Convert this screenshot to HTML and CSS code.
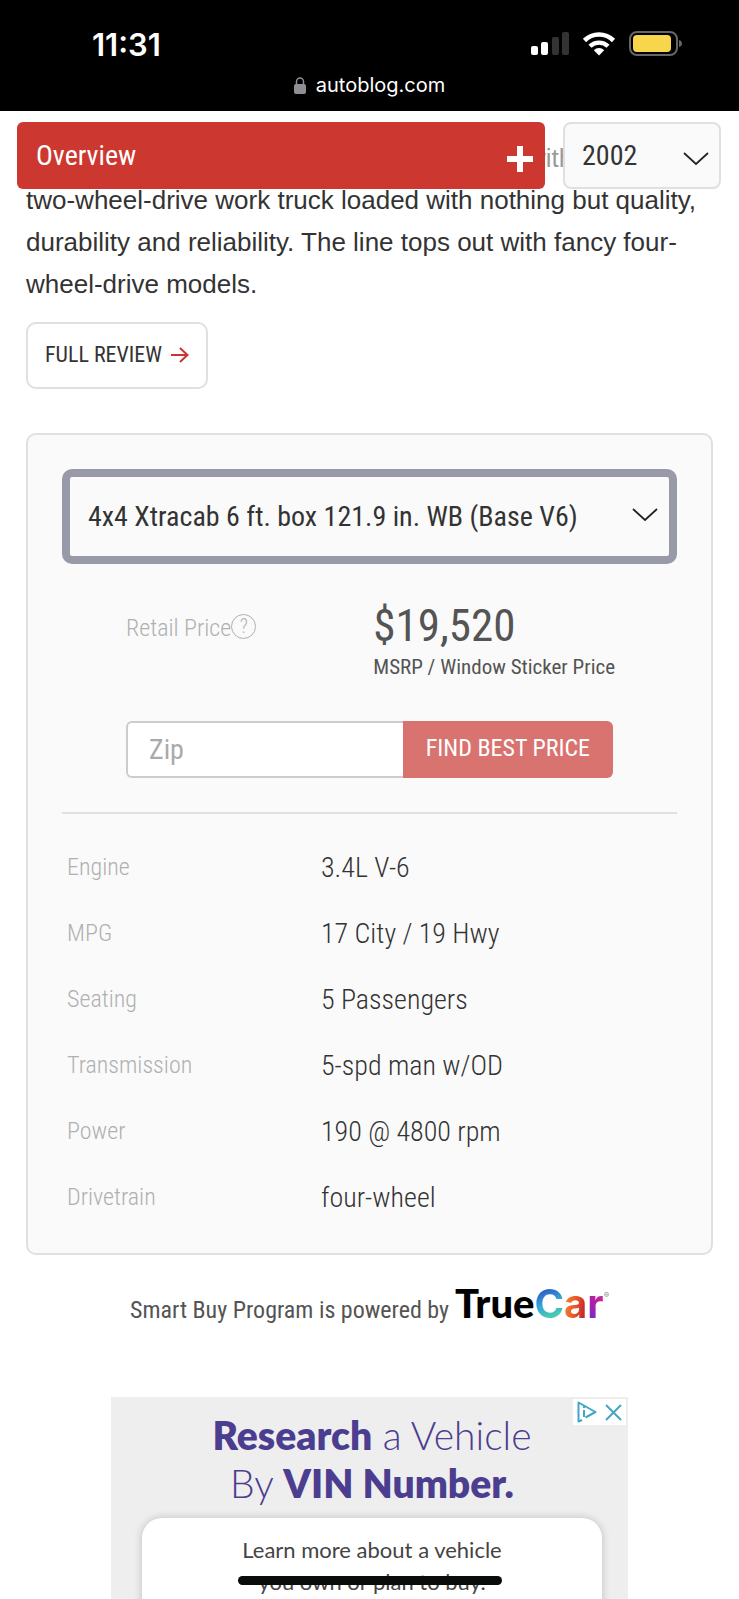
FILE: index.html
```html
<!DOCTYPE html>
<html lang="en">
<head>
    <meta charset="UTF-8">
    <meta name="viewport" content="width=device-width, initial-scale=1.0">
    <title>2002 Toyota Tacoma - Autoblog</title>
    <link rel="stylesheet" href="styles.css">
</head>
<body>
    <header class="phone-bar">
        <div class="status">
            <span class="time">11:31</span>
            <div class="status-icons">
                <svg width="38" height="24" viewBox="0 0 38 24">
                    <rect x="0" y="14" width="7" height="9" rx="2" fill="#fff"/>
                    <rect x="10" y="10" width="7" height="13" rx="2" fill="#fff"/>
                    <rect x="21" y="5" width="7" height="18" rx="2" fill="#333"/>
                    <rect x="31" y="0" width="7" height="23" rx="2" fill="#333"/>
                </svg>
                <svg width="34" height="24" viewBox="0 0 34 24">
                    <path d="M2.500 8.500A20.500 20.500 0 0 1 31.500 8.500" fill="none" stroke="#fff" stroke-width="4.600"/>
                    <path d="M8 14.300A12.800 12.800 0 0 1 26 14.300" fill="none" stroke="#fff" stroke-width="4.400"/>
                    <path d="M17 23.500L11.800 18.200A7.400 7.400 0 0 1 22.200 18.200Z" fill="#fff"/>
                </svg>
                <svg width="54" height="26" viewBox="0 0 54 26">
                    <rect x="1" y="1" width="47" height="23" rx="7" fill="none" stroke="#666" stroke-width="2"/>
                    <rect x="4" y="4" width="38" height="17" rx="4" fill="#f8d64c"/>
                    <path d="M50 9C54 10 54 15 50 16Z" fill="#666"/>
                </svg>
            </div>
        </div>
        <div class="address">
            <svg width="12" height="17" viewBox="0 0 12 17">
                <rect x="0" y="7" width="12" height="10" rx="2" fill="#8e8e93"/>
                <path d="M2.500 8V4.500A3.500 3.500 0 0 1 9.500 4.500V8" fill="none" stroke="#8e8e93" stroke-width="1.500"/>
            </svg>
            <span>autoblog.com</span>
        </div>
    </header>

    <main>
        <nav class="page-nav">
            <button class="overview-btn" type="button">
                <span>Overview</span>
                <svg width="26" height="26" viewBox="0 0 26 26">
                    <path d="M13 3V23M3 13H23" stroke="#fff" stroke-width="6" stroke-linecap="square" fill="none"/>
                </svg>
            </button>
            <div class="select-box year">
                <select aria-label="Year">
                    <option>2002</option>
                </select>
                <svg class="chevron" width="26" height="14" viewBox="0 0 26 14">
                    <path d="M1 1L13 12L25 1" fill="none" stroke="#222" stroke-width="1.700"/>
                </svg>
            </div>
        </nav>

        <p class="intro">with<br>
            two-wheel-drive work truck loaded with nothing but quality, durability and reliability. The line tops out with fancy four-wheel-drive models.</p>

        <a class="review-btn" href="#review">
            <span>FULL REVIEW</span>
            <svg width="18" height="16" viewBox="0 0 18 16">
                <path d="M0 8H16M9 1L16.500 8L9 15" fill="none" stroke="#cb3531" stroke-width="2"/>
            </svg>
        </a>

        <section class="card">
            <div class="select-box trim">
                <select aria-label="Trim">
                    <option>4x4 Xtracab 6 ft. box 121.9 in. WB (Base V6)</option>
                </select>
                <svg class="chevron" width="26" height="14" viewBox="0 0 26 14">
                    <path d="M1 1L13 12L25 1" fill="none" stroke="#222" stroke-width="1.700"/>
                </svg>
            </div>

            <div class="price">
                <div class="price-label">
                    <span>Retail Price</span>
                    <button class="help" type="button" aria-label="About retail price">?</button>
                </div>
                <div class="price-value">
                    <strong>$19,520</strong>
                    <small>MSRP / Window Sticker Price</small>
                </div>
            </div>

            <form class="zip-form">
                <input type="text" placeholder="Zip" aria-label="Zip">
                <button type="button">FIND BEST PRICE</button>
            </form>

            <hr>

            <table class="specs">
                <tr><th scope="row">Engine</th><td>3.4L V-6</td></tr>
                <tr><th scope="row">MPG</th><td>17 City / 19 Hwy</td></tr>
                <tr><th scope="row">Seating</th><td>5 Passengers</td></tr>
                <tr><th scope="row">Transmission</th><td>5-spd man w/OD</td></tr>
                <tr><th scope="row">Power</th><td>190 @ 4800 rpm</td></tr>
                <tr><th scope="row">Drivetrain</th><td>four-wheel</td></tr>
            </table>
        </section>

        <div class="powered">
            <span>Smart Buy Program is powered by</span>
            <span class="truecar"><b>True</b><span class="tc-c">C</span><span class="tc-a">a</span><span class="tc-r">r</span><sup>®</sup></span>
        </div>

        <aside class="ad">
            <div class="ad-choices">
                <svg width="20" height="22" viewBox="0 0 20 22">
                    <path d="M5 19L1.500 20.500V1.500L18.500 11L8.500 16.500" fill="none" stroke="#45a5c4" stroke-width="2" stroke-linejoin="round"/>
                    <path d="M7 9V16" stroke="#45a5c4" stroke-width="2"/>
                    <circle cx="7" cy="6" r="1.200" fill="#45a5c4"/>
                </svg>
                <svg width="17" height="17" viewBox="0 0 17 17">
                    <path d="M1 1L16 16M16 1L1 16" stroke="#45a5c4" stroke-width="2"/>
                </svg>
            </div>
            <h2><b>Research</b> a Vehicle<br>By <b>VIN Number.</b></h2>
            <div class="ad-card">Learn more about a vehicle<br>you own or plan to buy.</div>
        </aside>
    </main>

    <div class="home-indicator"></div>
</body>
</html>
```
FILE: styles.css
```css
* {
    box-sizing: border-box;
}
body {
    margin: 0;
    height: 100vh;
    display: flex;
    flex-direction: column;
    overflow: hidden;
    position: relative;
    background-color: #fff;
    color: #333;
    font-family: "Roboto Condensed", Roboto, sans-serif;
}
button, select, input {
    font-family: inherit;
    color: inherit;
    margin: 0;
}
svg {
    display: block;
    flex-shrink: 0;
}

/* phone bar */
.phone-bar {
    height: 111px;
    flex-shrink: 0;
    background-color: #000;
    color: #fff;
    font-family: Inter, sans-serif;
}
.status {
    display: flex;
    justify-content: space-between;
    align-items: center;
    height: 66px;
    padding: 22px 56px 0 92px;
}
.time {
    font-size: 31px;
    font-weight: 600;
}
.status-icons {
    display: flex;
    align-items: center;
    gap: 13px;
}
.address {
    display: flex;
    justify-content: center;
    align-items: center;
    gap: 10px;
    height: 38px;
    font-size: 20px;
}

/* page */
main {
    flex: 1;
    min-height: 0;
    display: flex;
    flex-direction: column;
    position: relative;
    padding: 26px 26px 0;
}
.page-nav {
    position: absolute;
    top: 0;
    left: 0;
    right: 0;
    display: flex;
    gap: 18px;
    height: 78px;
    padding: 11px 18px 0 17px;
    background-color: rgba(255, 255, 255, 0.5);
}
.overview-btn {
    flex: 1;
    display: flex;
    justify-content: space-between;
    align-items: center;
    padding: 0 12px 0 19px;
    border: none;
    border-radius: 6px;
    background-color: #cc3830;
    color: #fff;
    font-size: 28px;
}
.overview-btn svg {
    margin-top: 6px;
}
.select-box {
    position: relative;
}
.select-box select {
    width: 100%;
    height: 100%;
    appearance: none;
    outline: none;
    background-color: #fafafa;
    font-size: 28px;
}
.chevron {
    position: absolute;
    top: 50%;
    pointer-events: none;
}
.year {
    width: 158px;
}
.year select {
    padding: 0 17px;
    border: 2px solid #e0e0e0;
    border-radius: 8px;
}
.year .chevron {
    right: 12px;
    margin-top: -4px;
}
.intro {
    margin: 0;
    font-family: "Liberation Sans", Arial, sans-serif;
    font-size: 26px;
    line-height: 42px;
    text-indent: 501px;
}
.review-btn {
    align-self: flex-start;
    display: flex;
    align-items: center;
    gap: 9px;
    height: 67px;
    margin-top: 17px;
    padding: 0 17px 2px;
    border: 2px solid #e0e0e0;
    border-radius: 10px;
    color: #333;
    font-size: 22px;
    text-decoration: none;
}

/* price card */
.card {
    margin-top: 44px;
    padding: 34px 34px 23px;
    border: 2px solid #e0e0e0;
    border-radius: 10px;
    background-color: #fafafa;
}
.trim {
    height: 95px;
}
.trim select {
    padding: 0 18px;
    border: 8px solid #989aa8;
    border-radius: 10px;
}
.trim .chevron {
    right: 19px;
    margin-top: -9px;
}
.price {
    display: flex;
    justify-content: space-between;
    margin: 36px 62px 0 64px;
}
.price-label {
    display: flex;
    align-items: center;
    height: 52px;
    color: #b0b0b0;
    font-size: 24px;
    font-weight: 300;
}
.price-label span {
    padding-top: 4px;
}
.help {
    width: 25px;
    height: 25px;
    padding: 0;
    border: 1px solid #b0b0b0;
    border-radius: 50%;
    background: none;
    font-size: 20px;
    font-weight: 300;
    line-height: 22px;
}
.price-value {
    color: #545454;
}
.price-value strong {
    display: block;
    font-size: 45px;
    font-weight: 400;
    line-height: 52px;
}
.price-value small {
    display: block;
    font-size: 21px;
    line-height: 30px;
}
.zip-form {
    display: flex;
    height: 57px;
    margin: 39px 64px 34px;
}
.zip-form input {
    flex: 1;
    min-width: 0;
    padding: 0 21px;
    border: 2px solid #ccc;
    border-right: none;
    border-radius: 6px 0 0 6px;
    background-color: #fff;
    font-size: 28px;
}
.zip-form input::placeholder {
    color: #aaa;
}
.zip-form button {
    padding: 0 23px 3px;
    border: none;
    border-radius: 0 6px 6px 0;
    background-color: #d9736f;
    color: #fff;
    font-size: 24px;
}
hr {
    height: 2px;
    margin: 0 0 20px;
    border: none;
    background-color: #e0e0e0;
}
.specs {
    width: 100%;
    border-collapse: collapse;
    font-weight: 300;
}
.specs tr {
    height: 66px;
}
.specs th {
    width: 259px;
    padding: 0 0 0 5px;
    color: #b0b0b0;
    font-size: 24px;
    font-weight: 300;
    text-align: left;
}
.specs td {
    padding: 0;
    font-size: 28px;
}

.powered {
    display: flex;
    justify-content: center;
    align-items: baseline;
    gap: 6px;
    margin-top: 26px;
    color: #545454;
    font-size: 24px;
}
.truecar {
    color: #000;
    font-family: Inter, sans-serif;
    font-size: 40px;
    font-weight: 700;
    line-height: 46px;
}
.truecar b {
    font-family: Lato, sans-serif;
    font-weight: 900;
    line-height: 1;
}
.truecar span {
    background-clip: text;
    -webkit-background-clip: text;
    color: transparent;
}
.tc-c {
    background-image: linear-gradient(160deg, #2f62c4 25%, #35a8dc 50%, #4fd6a0 80%);
}
.tc-a {
    background-image: linear-gradient(100deg, #f08a32 10%, #e8582a 50%, #c4222c 85%);
}
.tc-r {
    background-image: linear-gradient(45deg, #7a28c8 20%, #c01f9c 60%, #e05090 90%);
}
.truecar sup {
    color: #888;
    font-size: 8px;
    font-weight: 400;
    line-height: 0;
    vertical-align: 20px;
}

/* ad */
.ad {
    flex: 1;
    position: relative;
    width: 517px;
    max-width: 100%;
    margin: 70px auto 0;
    padding: 14px 26px 0 31px;
    overflow: hidden;
    background-color: #eee;
    font-family: Lato, sans-serif;
    text-align: center;
}
.ad-choices {
    position: absolute;
    top: 2px;
    right: 2px;
    display: flex;
    align-items: center;
    gap: 8px;
    padding: 2px 4px;
    background-color: #fff;
}
.ad h2 {
    margin: 0;
    color: #4b3d8f;
    font-size: 39px;
    font-weight: 300;
    line-height: 48px;
}
.ad h2 b {
    font-weight: 800;
}
.ad-card {
    height: 200px;
    margin-top: 11px;
    padding-top: 16px;
    border-radius: 20px;
    background-color: #fff;
    box-shadow: 0 0 8px rgba(0, 0, 0, 0.2);
    color: #444;
    font-size: 22px;
    line-height: 32px;
}
.home-indicator {
    position: absolute;
    left: 50%;
    bottom: 14px;
    width: 264px;
    height: 9px;
    margin-left: -132px;
    border-radius: 5px;
    background-color: #0a0c0b;
}
```
